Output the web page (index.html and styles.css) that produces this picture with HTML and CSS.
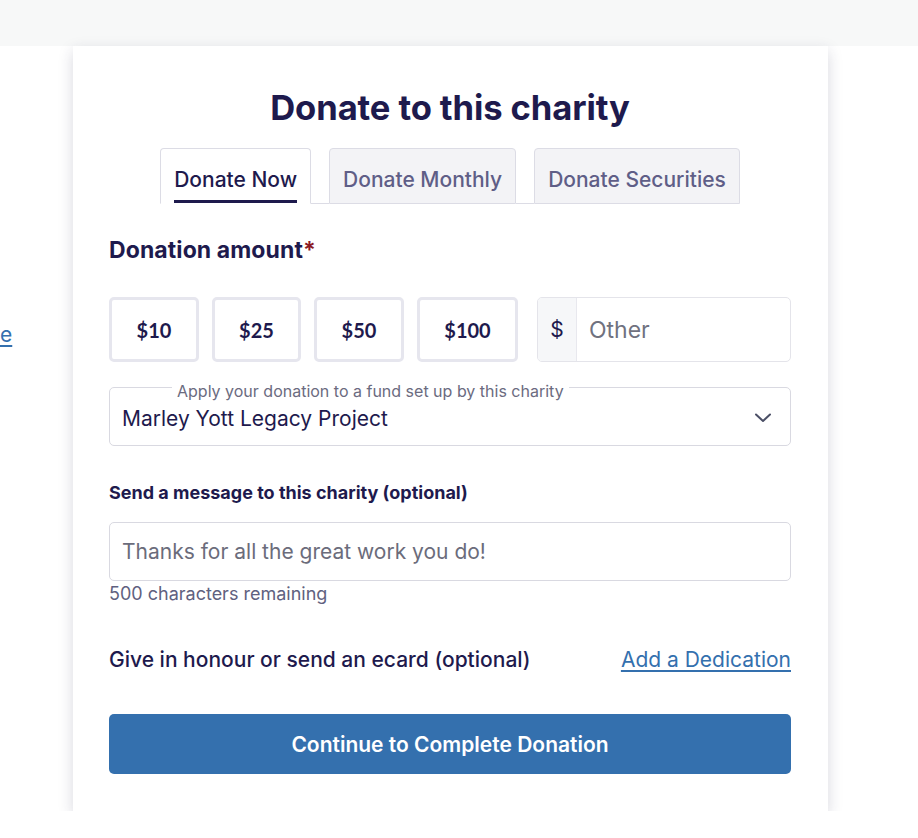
FILE: index.html
```html
<!DOCTYPE html>
<html lang="en">
<head>
<meta charset="utf-8">
<title>Donate to this charity</title>
<link rel="stylesheet" href="styles.css">
</head>
<body>
<div class="band"></div>
<div class="main">
  <aside class="side"><a href="#" class="side-link">e</a></aside>
  <section class="card">
    <h1 class="title">Donate to this charity</h1>
    <div class="tabs">
      <div class="tab active"><span class="tab-label">Donate Now</span></div>
      <div class="tab-gap"></div>
      <div class="tab"><span class="tab-label">Donate Monthly</span></div>
      <div class="tab-gap"></div>
      <div class="tab"><span class="tab-label">Donate Securities</span></div>
    </div>
    <h2 class="amount-label">Donation amount<span class="req">*</span></h2>
    <div class="amounts">
      <button class="amt w90">$10</button>
      <button class="amt w89">$25</button>
      <button class="amt w90">$50</button>
      <button class="amt w101">$100</button>
      <div class="other">
        <span class="prefix">$</span>
        <span class="other-ph">Other</span>
      </div>
    </div>
    <div class="select">
      <span class="float-label">Apply your donation to a fund set up by this charity</span>
      <span class="select-value">Marley Yott Legacy Project</span>
      <svg class="chev" width="18" height="10" viewBox="0 0 18 10"><path d="M2 1.5 L9 8 L16 1.5" fill="none" stroke="#4b4f66" stroke-width="2" stroke-linecap="round" stroke-linejoin="round"/></svg>
    </div>
    <div class="msg-label">Send a message to this charity (optional)</div>
    <div class="textarea"><span class="ph">Thanks for all the great work you do!</span></div>
    <div class="remaining">500 characters remaining</div>
    <div class="dedication">
      <span class="ded-text">Give in honour or send an ecard (optional)</span>
      <a href="#" class="ded-link">Add a Dedication</a>
    </div>
    <button class="continue">Continue to Complete Donation</button>
  </section>
</div>
</body>
</html>
```
FILE: styles.css
```css
* { box-sizing: border-box; }
html, body { margin: 0; padding: 0; background: #ffffff; }
body { font-family: Inter, "Noto Sans", sans-serif; color: #1e1a4d; }
.band { height: 46px; background: #f7f8f8; }
.main { display: flex; }
.side { width: 73px; padding-top: 274px; }
.side-link { font-size: 21px; color: #3470ae; text-decoration: underline; text-underline-offset: 3px; line-height: 30px; }
.card {
  width: 755px;
  background: #fff;
  box-shadow: 0 5px 14px rgba(40, 40, 80, 0.18);
  padding: 41px 37px 37px 36px;
}
.title { margin: 0; font-size: 34.6px; font-weight: 700; line-height: 40px; text-align: center; color: #1e1a4d; letter-spacing: -0.1px; }
.tabs { display: flex; justify-content: center; margin-top: 21px; }
.tab {
  height: 56px;
  padding: 0 13px;
  border: 1px solid #dcdce5;
  border-radius: 4px 4px 0 0;
  background: #f3f3f6;
  display: flex;
  align-items: flex-end;
}
.tab.active { background: #fff; border-bottom-color: #fff; }
.tab-gap { width: 18px; border-bottom: 1px solid #dcdce5; }
.tab-label { font-size: 21px; font-weight: 500; color: #5f5e87; line-height: 24px; padding-bottom: 11px; }
.tab.active .tab-label { color: #1e1a4d; border-bottom: 3px solid #1e1a4d; padding-bottom: 8px; }
.amount-label { margin: 31px 0 0; font-size: 23px; font-weight: 700; line-height: 30px; color: #1e1a4d; letter-spacing: 0.1px; }
.req { color: #8b1a24; }
.amounts { display: flex; margin-top: 32px; gap: 13px; }
.amt {
  height: 65px;
  border: 3px solid #e6e6ee;
  border-radius: 5px;
  background: #fff;
  font-family: Lato, "Noto Sans", sans-serif;
  font-weight: 700;
  font-size: 20px;
  color: #1e1a4d;
  padding: 0;
}
.w90 { width: 90px; }
.w89 { width: 89px; }
.w101 { width: 101px; }
.other {
  margin-left: 6px;
  flex: 1;
  height: 65px;
  border: 1px solid #e4e4ea;
  border-radius: 5px;
  display: flex;
  overflow: hidden;
}
.prefix { width: 39px; background: #f6f7f9; border-right: 1px solid #e8e8ee; display: flex; align-items: center; justify-content: center; font-size: 21px; color: #1e1a4d; }
.other-ph { display: flex; align-items: center; padding-left: 12px; font-size: 23px; color: #70727f; }
.select {
  position: relative;
  margin-top: 25px;
  height: 59px;
  border: 1px solid #d9d9e1;
  border-radius: 5px;
  display: flex;
  align-items: center;
  padding: 2px 18px 0 12px;
}
.float-label {
  position: absolute;
  left: 62px;
  top: -6px;
  padding: 0 5px;
  background: #fff;
  font-size: 16px;
  line-height: 18px;
  color: #6b6b80;
}
.select-value { flex: 1; font-size: 21px; color: #1e1a4d; padding-top: 1px; }
.chev { display: block; }
.msg-label { margin-top: 37px; font-size: 18px; font-weight: 700; line-height: 20px; color: #1e1a4d; }
.textarea {
  margin-top: 19px;
  height: 59px;
  border: 1px solid #d9d9e1;
  border-radius: 5px;
  display: flex;
  align-items: center;
  padding: 0 12px;
}
.ph { font-size: 21px; color: #6b6c7b; }
.remaining { margin-top: 2px; font-size: 18px; line-height: 22px; color: #5f6180; }
.dedication { display: flex; justify-content: space-between; align-items: center; margin-top: 42px; }
.ded-text { font-size: 21px; font-weight: 500; color: #1e1a4d; line-height: 26px; }
.ded-link { font-size: 21px; color: #3470ae; text-decoration: underline; text-underline-offset: 3px; line-height: 26px; }
.continue {
  display: block;
  width: 100%;
  margin-top: 41px;
  height: 60px;
  border: none;
  border-radius: 5px;
  background: #3470ae;
  color: #fff;
  font-family: Inter, "Noto Sans", sans-serif;
  font-size: 21px;
  font-weight: 600;
}
```
